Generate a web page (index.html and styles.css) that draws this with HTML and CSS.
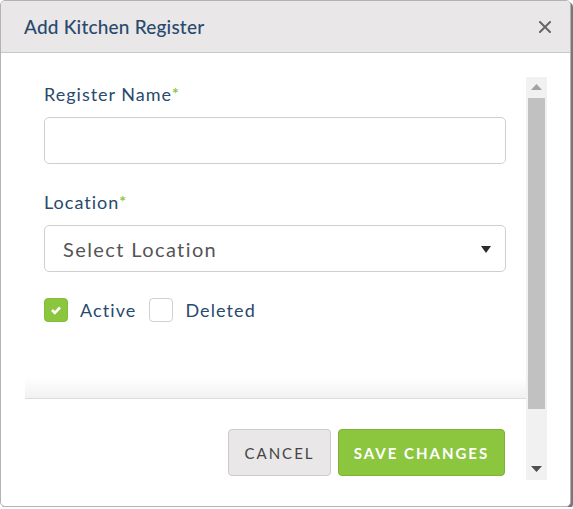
FILE: index.html
```html
<!DOCTYPE html>
<html lang="en">
<head>
    <meta charset="UTF-8">
    <title>Add Kitchen Register</title>
    <link rel="stylesheet" href="styles.css">
</head>
<body>
    <div class="dialog">
        <div class="dialog-header">
            <h2 class="dialog-title">Add Kitchen Register</h2>
            <svg class="close-icon" width="12" height="12" viewBox="0 0 12 12">
                <path d="M1 1 L11 11 M11 1 L1 11" stroke="#666" stroke-width="2" stroke-linecap="square"/>
            </svg>
        </div>
        <div class="dialog-scroll">
            <div class="dialog-body">
                <div class="field">
                    <label class="field-label">Register Name<span class="req">*</span></label>
                    <div class="text-input"></div>
                </div>
                <div class="field">
                    <label class="field-label">Location<span class="req">*</span></label>
                    <div class="select-input">
                        <span>Select Location</span>
                        <svg width="10" height="7" viewBox="0 0 10 7"><path d="M0 0 H10 L5 7 Z" fill="#2b2b2b"/></svg>
                    </div>
                </div>
                <div class="checks">
                    <div class="check">
                        <span class="box checked">
                            <svg width="12" height="10" viewBox="0 0 12 10"><path d="M2 5 L4.8 7.8 L10 2.5" fill="none" stroke="#fff" stroke-width="2.6"/></svg>
                        </span>
                        Active
                    </div>
                    <div class="check">
                        <span class="box"></span>
                        Deleted
                    </div>
                </div>
                <div class="fade"></div>
                <div class="dialog-footer">
                    <button class="btn btn-cancel">CANCEL</button>
                    <button class="btn btn-save">SAVE CHANGES</button>
                </div>
            </div>
            <div class="scrollbar">
                <svg class="arrow" width="11" height="6" viewBox="0 0 11 6"><path d="M0 6 L5.5 0 L11 6 Z" fill="#a3a3a3"/></svg>
                <div class="thumb"></div>
                <div class="track-rest"></div>
                <svg class="arrow" width="11" height="6" viewBox="0 0 11 6"><path d="M0 0 H11 L5.5 6 Z" fill="#505050"/></svg>
            </div>
        </div>
    </div>
</body>
</html>
```

FILE: styles.css
```css
body {
    margin: 0;
    background: #fff;
    font-family: 'Lato', 'Open Sans', sans-serif;
}

.dialog {
    width: 569px;
    height: 505px;
    border: 1px solid #b3b3b3;
    border-radius: 5px;
    background: #fff;
    box-shadow: 2px 2px 0 #777;
    overflow: hidden;
}

.dialog-header {
    height: 51px;
    background: #e9e7e8;
    border-bottom: 1px solid #c8c8c8;
    display: flex;
    align-items: center;
    justify-content: space-between;
    padding: 0 19px 0 23px;
}

.dialog-title {
    margin: 0;
    font-size: 19px;
    font-weight: 500;
    color: #284a6d;
    letter-spacing: 0.2px;
}

.close-icon {
    margin-top: 1px;
}

.dialog-scroll {
    margin: 24px 0 0 24px;
    width: 522px;
    height: 403px;
    display: flex;
    overflow: hidden;
}

.dialog-body {
    flex: 1;
    padding: 6px 0 0 0;
}

.field {
    padding: 0 20px 0 19px;
    margin-bottom: 27px;
}

.field-label {
    display: block;
    font-size: 18px;
    color: #284a6d;
    height: 22px;
    margin-bottom: 12px;
    letter-spacing: 1px;
}

.req {
    color: #8cc63f;
    font-weight: 700;
    font-size: 16px;
    letter-spacing: 0;
    vertical-align: 2px;
}

.text-input,
.select-input {
    height: 45px;
    border: 1px solid #cfcfcf;
    border-radius: 5px;
}

.select-input {
    display: flex;
    align-items: center;
    justify-content: space-between;
    padding: 0 14px 0 18px;
    font-size: 20px;
    color: #555;
    letter-spacing: 1.4px;
}

.select-input svg {
    margin-top: 1px;
}

.checks {
    display: flex;
    gap: 13px;
    padding-left: 19px;
    margin-top: -1px;
}

.check {
    display: flex;
    align-items: center;
    gap: 12px;
    font-size: 18px;
    color: #284a6d;
    letter-spacing: 1.1px;
}

.box {
    width: 22px;
    height: 22px;
    border: 1px solid #d0d0d0;
    border-radius: 4px;
    background: #fff;
    display: flex;
    align-items: center;
    justify-content: center;
}

.box.checked {
    background: #8cc63f;
    border-color: #82bb38;
}

.fade {
    height: 21px;
    margin-top: 55px;
    background: linear-gradient(#fff, #f1f1f1);
    border-bottom: 1px solid #dcdcdc;
}

.dialog-footer {
    display: flex;
    justify-content: flex-end;
    gap: 7px;
    padding: 30px 21px 0 0;
}

.btn {
    height: 47px;
    border-radius: 4px;
    font-family: inherit;
    font-size: 15px;
    letter-spacing: 2px;
    padding: 0;
}

.btn-cancel {
    width: 103px;
    background: #e9e7e8;
    border: 1px solid #cbcbcb;
    color: #444;
}

.btn-save {
    width: 167px;
    background: #8cc63f;
    border: 1px solid #7db233;
    color: #fff;
    font-weight: 700;
}

.scrollbar {
    width: 21px;
    background: #f1f1f1;
    display: flex;
    flex-direction: column;
    align-items: center;
}

.arrow {
    margin: 7px 0 8px;
}

.thumb {
    width: 17px;
    height: 311px;
    background: #c1c1c1;
}

.track-rest {
    flex: 1;
}
```
